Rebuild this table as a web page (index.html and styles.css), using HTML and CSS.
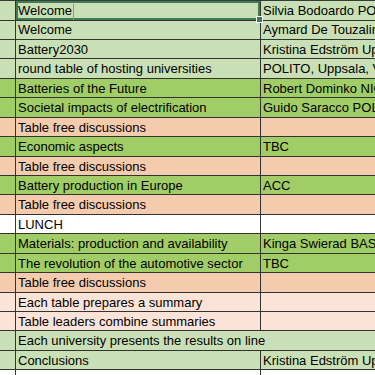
FILE: index.html
```html
<!DOCTYPE html>
<html lang="en">
<head>
    <meta charset="UTF-8">
    <meta name="viewport" content="width=device-width, initial-scale=1.0">
    <title>Programme</title>
    <link rel="stylesheet" href="styles.css">
</head>
<body>
  <div class="sheet">
    <div class="row light"><div class="hdr"></div><div class="cell active">Welcome<span class="caret"></span></div><div class="cell">Silvia Bodoardo POLITO</div></div>
    <div class="row light"><div class="hdr"></div><div class="cell">Welcome</div><div class="cell">Aymard De Touzalin</div></div>
    <div class="row light"><div class="hdr"></div><div class="cell">Battery2030</div><div class="cell">Kristina Edström Uppsala</div></div>
    <div class="row light"><div class="hdr"></div><div class="cell">round table of hosting universities</div><div class="cell">POLITO, Uppsala, VUB</div></div>
    <div class="row green"><div class="hdr"></div><div class="cell">Batteries of the Future</div><div class="cell">Robert Dominko NIC</div></div>
    <div class="row green"><div class="hdr"></div><div class="cell">Societal impacts of electrification</div><div class="cell">Guido Saracco POLITO</div></div>
    <div class="row salmon"><div class="hdr"></div><div class="cell">Table free discussions</div><div class="cell"></div></div>
    <div class="row green"><div class="hdr"></div><div class="cell">Economic aspects</div><div class="cell">TBC</div></div>
    <div class="row salmon"><div class="hdr"></div><div class="cell">Table free discussions</div><div class="cell"></div></div>
    <div class="row green"><div class="hdr"></div><div class="cell">Battery production in Europe</div><div class="cell">ACC</div></div>
    <div class="row salmon"><div class="hdr"></div><div class="cell">Table free discussions</div><div class="cell"></div></div>
    <div class="row white"><div class="hdr"></div><div class="cell">LUNCH</div><div class="cell"></div></div>
    <div class="row green"><div class="hdr"></div><div class="cell">Materials: production and availability</div><div class="cell">Kinga Swierad BASF</div></div>
    <div class="row green"><div class="hdr"></div><div class="cell">The revolution of the automotive sector</div><div class="cell">TBC</div></div>
    <div class="row salmon"><div class="hdr"></div><div class="cell">Table free discussions</div><div class="cell"></div></div>
    <div class="row peach"><div class="hdr"></div><div class="cell">Each table prepares a summary</div><div class="cell"></div></div>
    <div class="row peach"><div class="hdr"></div><div class="cell">Table leaders combine summaries</div><div class="cell"></div></div>
    <div class="row light"><div class="hdr"></div><div class="cell wide">Each university presents the results on line</div></div>
    <div class="row light"><div class="hdr"></div><div class="cell">Conclusions</div><div class="cell">Kristina Edström Uppsala</div></div>
    <div class="row white"><div class="hdr"></div><div class="cell"></div><div class="cell"></div></div>
  </div>
</body>
</html>
```

FILE: styles.css
```css
* {
  box-sizing: border-box;
}
body {
  margin: 0;
  overflow: hidden;
  font-family: "Liberation Sans", Arial, sans-serif;
  font-size: 13px;
  color: #000;
}
.sheet {
  width: 375px;
  border-top: 1px solid #3a3a3a;
}
.row {
  display: grid;
  grid-template-columns: 16px 245px 1fr;
  height: 19.45px;
}
.hdr,
.cell {
  border-bottom: 1px solid #333;
  border-right: 1px solid #333;
  line-height: 19px;
  padding-left: 2px;
  white-space: nowrap;
  overflow: hidden;
}
.cell:last-child {
  border-right: none;
}
.cell.wide {
  grid-column: 2 / 4;
}
.light { background-color: #c9e0b6; }
.green { background-color: #a1cd66; }
.salmon { background-color: #f5cbae; }
.peach { background-color: #fbe4d7; }
.white { background-color: #fff; }

.active {
  position: relative;
  overflow: visible;
  box-shadow: inset 0 0 0 2px #3f7c52;
}
.active::after {
  content: "";
  position: absolute;
  right: -3px;
  bottom: -3px;
  width: 5px;
  height: 5px;
  background: #3f7c52;
  border: 1px solid #fff;
}
.caret {
  display: inline-block;
  width: 1px;
  height: 16px;
  margin-left: 1px;
  vertical-align: middle;
  background: #8a9a86;
}
```
